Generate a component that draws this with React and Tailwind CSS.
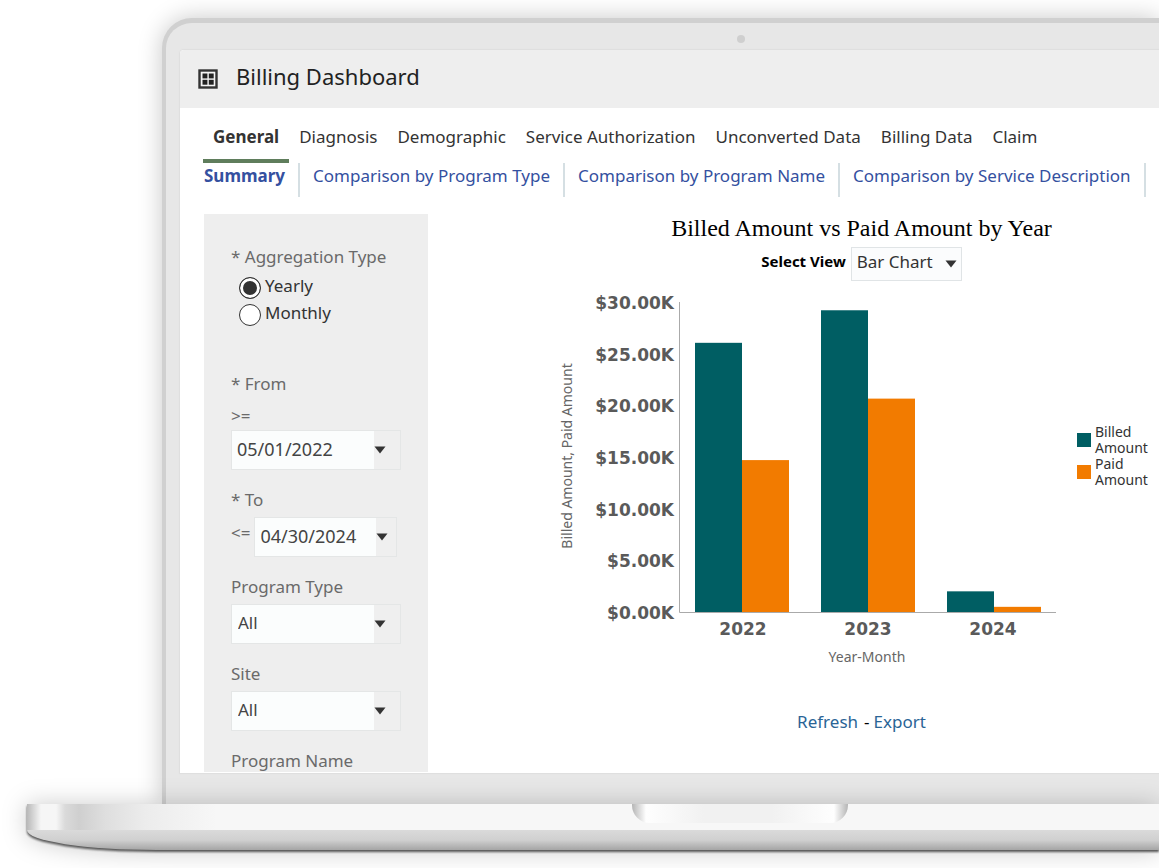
const tabs = ["General", "Diagnosis", "Demographic", "Service Authorization", "Unconverted Data", "Billing Data", "Claim"]

const subTabs = [
  "Summary",
  "Comparison by Program Type",
  "Comparison by Program Name",
  "Comparison by Service Description",
]

const amounts = [
  { year: "2022", billed: 26.05, paid: 14.7 },
  { year: "2023", billed: 29.2, paid: 20.65 },
  { year: "2024", billed: 2, paid: 0.5 },
]

const ticks = [30, 25, 20, 15, 10, 5, 0]

const Caret = ({ className }) => (
  <svg viewBox="0 0 12 8" className={className} aria-hidden="true">
    <path d="M0.5 0.5h11L6 7.5z" fill="#333" />
  </svg>
)

const GridIcon = () => (
  <svg viewBox="0 0 20 20" className="size-5" aria-hidden="true">
    <rect x="1.5" y="1.5" width="17" height="17" fill="#f4f4f4" stroke="#333" strokeWidth="2.4" />
    <rect x="4.5" y="4.5" width="4.9" height="4.9" fill="#222" />
    <rect x="10.8" y="4.5" width="4.9" height="4.9" fill="#222" />
    <rect x="4.5" y="10.8" width="4.9" height="4.9" fill="#222" />
    <rect x="10.8" y="10.8" width="4.9" height="4.9" fill="#222" />
  </svg>
)

const DateField = ({ id, value, buttonWidth = "w-[26px]" }) => (
  <div className="flex h-10 flex-1 border border-[#e4e6e6] bg-[#fbfdfd]">
    <input id={id} type="text" defaultValue={value} className="w-0 flex-1 pb-[2px] pl-[5px] text-lg text-[#444] outline-none" />
    <button type="button" aria-label="Open calendar" className={`flex items-center bg-[#efefef] ${buttonWidth}`}>
      <Caret className="h-2 w-3" />
    </button>
  </div>
)

const SelectField = ({ id, label }) => (
  <div className="flex flex-col gap-[5px]">
    <label htmlFor={id}>{label}</label>
    <div className="relative h-10 border border-[#e4e6e6] bg-[#fbfdfd]">
      <select id={id} className="h-full w-full appearance-none pb-[2px] pl-[6px] text-[#444] outline-none">
        <option>All</option>
      </select>
      <span className="pointer-events-none absolute inset-y-0 right-0 flex w-[26px] items-center bg-[#efefef]">
        <Caret className="h-2 w-3" />
      </span>
    </div>
  </div>
)

const Radio = ({ label, checked }) => (
  <label className="flex h-[27px] items-start gap-1 text-[#333]">
    <input
      type="radio"
      name="aggregation"
      defaultChecked={checked}
      className="mt-[3px] size-[22px] appearance-none rounded-full border-[1.5px] border-[#333] bg-white checked:bg-[#333] checked:shadow-[inset_0_0_0_3px_white]"
    />
    {label}
  </label>
)

const Filters = () => (
  <aside className="flex w-56 shrink-0 flex-col bg-[#eee] px-[27px] pt-[31px] text-[17px] leading-6 text-[#6a6a6a]">
    <fieldset className="h-[127px]">
      <legend className="mb-[5px]">* Aggregation Type</legend>
      <div className="pl-2">
        <Radio label="Yearly" checked />
        <Radio label="Monthly" />
      </div>
    </fieldset>
    <div className="flex flex-col gap-[18px]">
      <div>
        <label htmlFor="from">* From</label>
        <div className="mt-2 mb-[2px]">&gt;=</div>
        <div className="flex">
          <DateField id="from" value="05/01/2022" />
        </div>
      </div>
      <div className="flex flex-col gap-[5px]">
        <label htmlFor="to">* To</label>
        <div className="flex gap-1 pr-1">
          <span className="pt-1">&lt;=</span>
          <DateField id="to" value="04/30/2024" buttonWidth="w-5" />
        </div>
      </div>
      <SelectField id="program-type" label="Program Type" />
      <SelectField id="site" label="Site" />
      <div className="h-[23px] leading-[23px]">Program Name</div>
    </div>
  </aside>
)

const AmountChart = () => {
  const base = 322
  const scale = 310 / 30
  return (
    <svg width="506" height="380" viewBox="0 0 506 380" className="shrink-0" role="img" aria-label="Billed and paid amount by year">
      <text transform="translate(16 166) rotate(-90)" textAnchor="middle" fontSize="14" fill="#666">
        Billed Amount, Paid Amount
      </text>
      <g fontFamily="DejaVu Sans" fontWeight="700" fontSize="17" fill="#5a5a5a">
        {ticks.map((t) => (
          <text key={t} x="118" y={base + 7 - t * scale} textAnchor="end">{`$${t}.00K`}</text>
        ))}
        {amounts.map((a, i) => (
          <text key={a.year} x={187 + i * 125} y="345" textAnchor="middle">{a.year}</text>
        ))}
      </g>
      <path d="M123.5 12v310.5H500" fill="none" stroke="#aaa" />
      {amounts.map((a, i) => (
        <g key={a.year}>
          <rect x={139 + i * 126} y={base - a.billed * scale} width="47" height={a.billed * scale} fill="#005e63" />
          <rect x={186 + i * 126} y={base - a.paid * scale} width="47" height={a.paid * scale} fill="#f27b00" />
        </g>
      ))}
      <text x="311" y="372" textAnchor="middle" fontSize="14" fill="#666">Year-Month</text>
    </svg>
  )
}

const ChartPanel = () => (
  <section className="flex min-w-0 flex-1 flex-col pl-32">
    <div className="flex flex-col items-center pl-2">
      <h2 className="font-['Liberation_Serif',serif] text-2xl leading-7 text-black">Billed Amount vs Paid Amount by Year</h2>
      <div className="mt-[5px] flex gap-[5px]">
        <label htmlFor="view" className="text-[15px] leading-7 font-bold text-black">Select View</label>
        <div className="relative h-[34px] w-[111px] border border-[#e0e4e6] bg-[#fbfcfd]">
          <select id="view" className="h-7 w-full appearance-none pl-[5px] text-[17px] text-[#333] outline-none">
            <option>Bar Chart</option>
          </select>
          <Caret className="pointer-events-none absolute top-3 right-1 h-2 w-3" />
        </div>
      </div>
    </div>
    <div className="mt-[9px] flex gap-[15px]">
      <AmountChart />
      <ul className="mt-[134px] w-[76px] text-sm leading-4 text-[#333]">
        <li className="flex items-center gap-1">
          <span className="size-[14px] shrink-0 bg-[#005e63]" />
          <span>Billed Amount</span>
        </li>
        <li className="flex items-center gap-1">
          <span className="size-[14px] shrink-0 bg-[#f27b00]" />
          <span>Paid Amount</span>
        </li>
      </ul>
    </div>
    <div className="mt-10 flex justify-center pl-2 text-[17px] leading-6 text-[#2a6496]">
      <a href="#refresh">Refresh</a>
      <span className="pl-[6px] text-black">-</span>
      <a href="#export" className="pl-1">Export</a>
    </div>
  </section>
)

const Screen = () => (
  <div className="overflow-hidden rounded-tl bg-white shadow-[0_0_1px_1px_#dedede]">
    <header className="flex h-[58px] items-center gap-[18px] bg-[#eee] pl-[18px]">
      <GridIcon />
      <h1 className="pb-[6px] text-[22px] leading-8 text-[#222]">Billing Dashboard</h1>
    </header>
    <nav className="flex pl-[23px] whitespace-nowrap text-[17px] leading-6 text-[#333]">
      {tabs.map((tab, i) => (
        <a
          key={tab}
          href="#tab"
          className={i === 0 ? "border-b-4 border-[#5f7d5c] px-[10px] pt-[17px] pb-[10px] font-bold" : "px-[10px] pt-[17px]"}
        >
          {tab}
        </a>
      ))}
    </nav>
    <nav className="flex pl-[11px] whitespace-nowrap text-[17px] leading-[26px] text-[#3450a0]">
      {subTabs.map((tab, i) => (
        <a
          key={tab}
          href="#subtab"
          className={i === 0 ? "h-[34px] border-r-2 border-[#d5dfe3] px-[13px] font-bold" : "h-[34px] border-r-2 border-[#d5dfe3] px-[13px]"}
        >
          {tab}
        </a>
      ))}
    </nav>
    <main className="mt-[17px] mb-px flex pl-6">
      <Filters />
      <ChartPanel />
    </main>
  </div>
)

const LaptopBase = () => (
  <div className="relative ml-[27px] drop-shadow-[0_2px_1px_#555]">
    <div className="h-[26px] bg-[linear-gradient(90deg,#b9b9b9_0px,#f6f6f6_14px,#f6f6f6_29px,#dadada_38px,#cfcfcf_52px,#dedede_78px,#ececec_118px,#f7f7f7_190px)] pl-[605px]">
      <div className="h-[19px] w-[216px] rounded-b-[18px] bg-[linear-gradient(90deg,#b5b5b5_0px,#fefefe_14px,#f1f1f1_72px,#f1f1f1_140px,#fefefe_202px,#b5b5b5_216px)]" />
    </div>
    <div className="h-5 rounded-bl-[130px_20px] bg-linear-to-b from-[#dadada] via-[#d0d0d0] to-[#a5a5a5]" />
  </div>
)

const App = () => (
  <div className="overflow-hidden bg-white pt-[18px] pb-[19px] font-['Noto_Sans',sans-serif]">
    <div className="ml-[162px] rounded-tl-[30px] border-t-[5px] border-l-4 border-[#d0d0d0] bg-[#e7e7e7] pb-[31px] pl-[14px] shadow-[0_0_24px_#00000038]">
      <div className="flex h-[27px] pt-3 pl-[557px]">
        <span className="size-2 rounded-full bg-[#cfcfcf]" />
      </div>
      <Screen />
    </div>
    <div className="drop-shadow-[0_0_12px_#00000033]">
      <LaptopBase />
    </div>
  </div>
)

export default App
